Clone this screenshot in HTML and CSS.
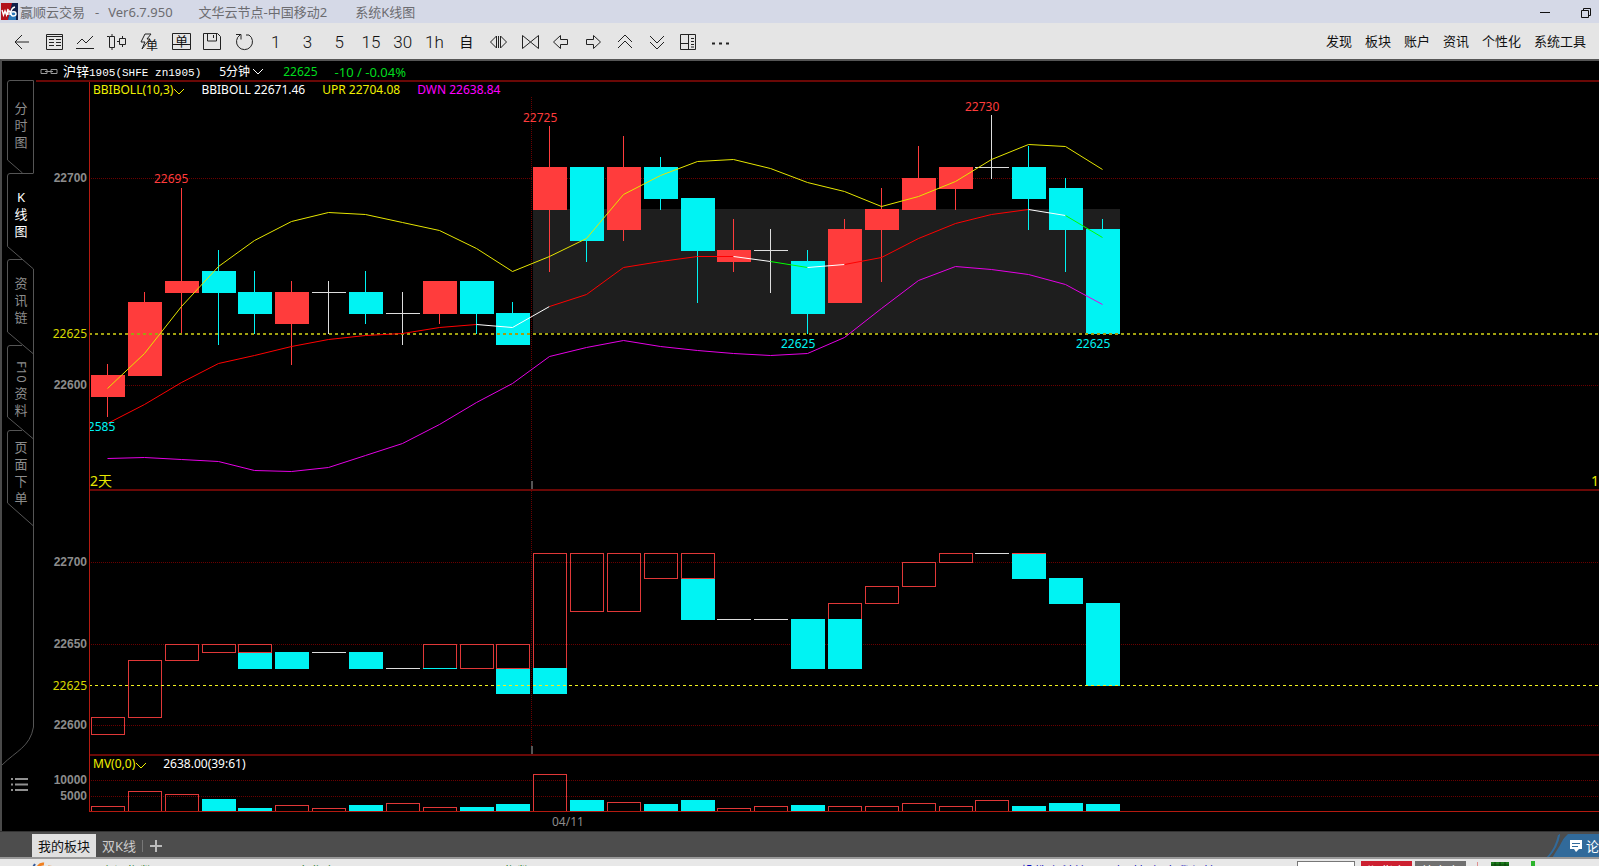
FILE: index.html
```html
<!DOCTYPE html>
<html lang="zh-CN">
<head>
<meta charset="utf-8">
<title>赢顺云交易</title>
<link rel="stylesheet" href="styles.css">
</head>
<body>
<div class="app">
  <header class="titlebar">
    <svg class="logo" width="17" height="17" viewBox="0 0 17 17" aria-hidden="true">
      <rect width="17" height="17" fill="#10204a"/><path d="M0 0h11L7 17H0z" fill="#b3121c"/><path d="M9 9h6v8H7z" fill="#2a78b8"/>
      <path d="M1 7l1.500 5L4 8l1.500 4L7 6v6M7 9q2-2 2 0v3M14 4q-4 1-4 6q0 3 2 3q3 0 3-2q0-3-4-2" fill="none" stroke="#fff" stroke-width="1.400"/>
    </svg>
    <span class="t-name">赢顺云交易</span><span class="t-dash">-</span><span class="t-ver">Ver6.7.950</span>
    <span class="t-node">文华云节点-中国移动2</span><span>系统K线图</span>
    <div class="winbtns">
      <button aria-label="最小化"><svg width="14" height="14"><path d="M2 7.500h10"/></svg></button>
      <button aria-label="还原"><svg width="14" height="14"><path d="M2.500 5.500h7v7h-7zM4.500 5V3.500h7v7H10"/></svg></button>
    </div>
  </header>

  <nav class="toolbar">
    <div class="tools">
      <button aria-label="后退"><svg width="24" height="24"><path d="M19 12H5M12 5l-7 7 7 7"/></svg></button>
      <button aria-label="报价"><svg width="24" height="24"><path d="M4.500 4.500h16v15h-16zM7 9.500h5M14 9.500h5M7 12.500h5M14 12.500h5M7 15.500h5M14 15.500h5M4 6.500h16"/></svg></button>
      <button aria-label="分时"><svg width="24" height="24"><path d="M3 18.500h18M4 14l5-5 4 4 7-7"/></svg></button>
      <button aria-label="K线"><svg width="24" height="24"><path d="M4.500 6.500h5v11h-5zM7 4v2.500M7 17.500V20M14.500 8.500h6v6h-6zM17.500 6v2.500M17.500 14.500V17M2 6.500h2M12 11.500h2"/></svg></button>
      <button aria-label="闪电下单"><svg width="24" height="24"><path d="M8 4h6l-4 5h3L5 19l3-7H4z"/><text x="9" y="20" font-size="12">单</text></svg></button>
      <button aria-label="下单"><svg width="24" height="24"><path d="M3.500 3.500h18v16h-18zM3 14.500h4M18 14.500h4"/><text x="6" y="16" font-size="13">单</text></svg></button>
      <button aria-label="保存"><svg width="24" height="24"><path d="M3.500 3.500h14l3 3v13h-17zM7.500 4v7h9V4M13.500 5v3"/></svg></button>
      <button aria-label="刷新"><svg width="24" height="24"><path d="M8 5a8 8 0 1 0 9 0M4 4.500h5v5M14 5h3"/></svg></button>
      <button>1</button><button>3</button><button>5</button><button>15</button><button>30</button><button>1h</button>
      <button class="zi">自</button>
      <button aria-label="放大"><svg width="24" height="24"><path d="M10.500 6v12l-6-6zM14.500 6v12l6-6zM12.500 6v12"/></svg></button>
      <button aria-label="缩小"><svg width="24" height="24"><path d="M4.500 5.500v13l8-6.500zM20.500 5.500v13l-8-6.500z"/></svg></button>
      <button aria-label="左移"><svg width="24" height="24"><path d="M11.500 5.500v4h7v5h-7v4L4.500 12z"/></svg></button>
      <button aria-label="右移"><svg width="24" height="24"><path d="M12.500 5.500v4h-7v5h7v4l7-6.500z"/></svg></button>
      <button aria-label="上翻"><svg width="24" height="24"><path d="M5 12l7-7 7 7M5 18l7-7 7 7"/></svg></button>
      <button aria-label="下翻"><svg width="24" height="24"><path d="M5 6l7 7 7-7M5 12l7 7 7-7"/></svg></button>
      <button aria-label="布局"><svg width="24" height="24"><path d="M4.500 4.500h15v15h-15zM12.500 4v16M5 13.500h7M15 8.500h3M15 11.500h3M15 14.500h3M15 17h3"/></svg></button>
      <button aria-label="更多"><svg width="24" height="24"><path d="M4 13.500h3M11 13.500h3M18 13.500h3" stroke-width="2"/></svg></button>
    </div>
    <div class="menus">
      <button>发现</button><button>板块</button><button>账户</button><button>资讯</button><button>个性化</button><button>系统工具</button>
    </div>
  </nav>

  <main class="main">
    <aside class="side">
      <svg class="side-lines" width="34" height="770" aria-hidden="true">
        <path d="M31.500 112V19.500H8q-2.500 0-2.500 2.500V99l15 13M31.500 112.500H8q-2.500 0-2.500 2.500V185.500L31.500 208V666M21 198.500H8q-2.500 0-2.500 2.500V271l26 22M20 284.500H8q-2.500 0-2.500 2.500V356l26 22M20 369.500H8q-2.500 0-2.500 2.500V442l26 23M31.500 666C28 686 14 690 0 704"/>
      </svg>
      <button class="vtab first"><span>分</span><span>时</span><span>图</span></button>
      <button class="vtab on"><span>K</span><span>线</span><span>图</span></button>
      <button class="vtab"><span>资</span><span>讯</span><span>链</span></button>
      <button class="vtab"><span class="rot">F10</span><span>资</span><span>料</span></button>
      <button class="vtab last"><span>页</span><span>面</span><span>下</span><span>单</span></button>
      <button class="list" aria-label="列表"><svg width="18" height="16"><path d="M0 2h2M4 2h13M0 7.500h2M4 7.500h13M0 13h2M4 13h13"/></svg></button>
    </aside>

    <section class="chart">
      <div class="chart-head">
        <svg class="chain" width="18" height="8"><path d="M7 1.500H1v4h6zM11 1.500h6v4h-6zM5 3.500h8"/></svg>
        <span class="sym">沪锌<span class="mono">1905(SHFE zn1905)</span></span>
        <label class="period"><select aria-label="周期"><option>5分钟</option></select><svg width="12" height="8"><path d="M1 1l5 5 5-5"/></svg></label>
        <span class="green last-price">22625</span><span class="green change">-10 / -0.04%</span>
      </div>
      <div class="panel p-main">
        <svg id="candles" class="plot"></svg>
        <div class="legend">
          <button class="yellow">BBIBOLL(10,3)<svg width="10" height="8"><path d="M0 1l5 5 5-5"/></svg></button>
          <span>BBIBOLL 22671.46</span><span class="yellow">UPR 22704.08</span><span class="magenta">DWN 22638.84</span>
        </div>
      </div>
      <div class="panel p-sub"><svg id="bricks" class="plot"></svg></div>
      <div class="panel p-vol">
        <svg id="volume" class="plot"></svg>
        <div class="legend"><button class="yellow">MV(0,0)<svg width="10" height="8"><path d="M0 1l5 5 5-5"/></svg></button><span>2638.00(39:61)</span></div>
      </div>
      <div class="time-axis">04/11</div>
    </section>
  </main>

  <nav class="pages">
    <button class="page on">我的板块</button><button class="page">双K线</button><i class="sep"></i>
    <button class="add" aria-label="添加"><svg width="12" height="12"><path d="M0 6h12M6 0v12"/></svg></button>
    <a class="forum" href="#">
      <svg class="forum-bg" width="53" height="24"><path d="M22 0h31v24H0Q10 17 13 0H15Q13 15 5 24L17 5z" fill="#316a9a"/><path d="M14 0Q10 16 2 24H6Q14 12 20 0z" fill="#4d4d4d"/><path d="M12 1h2Q12 14 2 24H0Q9 15 12 1z" fill="#316a9a"/></svg>
      <svg class="bubble" width="12" height="14"><path d="M0 1h12v9H9l-3 3-2-3H0z" fill="#fff"/><path d="M2 4.500h8M2 7.500h6" stroke="#316a9a"/></svg><span>论</span>
    </a>
  </nav>

  <footer class="status">
    <svg class="mark" width="40" height="18"><path d="M0 10l5-8" stroke="#345a9a" stroke-width="2"/><path d="M7 12Q7 1 14 2M18 5l8 1M30 6h4" stroke="#f08020" stroke-width="3" fill="none"/></svg>
    <span class="idx"><span>上证指数</span><span>3189.96</span><span>-51.87</span></span>
    <span class="idx"><span>文华商品</span><span>156.11</span><span>-0.24</span></span>
    <span class="idx"><span>IF指数</span><span>188.48</span><span>-4.34</span></span>
    <a class="news" href="#">投教小科普，开户时如何自我保护</a>
    <input class="code" aria-label="代码">
    <button class="acc red">期货户</button><button class="acc grey">外盘户</button>
    <i class="bar"></i>
    <svg class="net" width="46" height="20"><path d="M0 1h18v16H0z" fill="#1b7a1b"/><path d="M0 4h18M0 8h18M4 1v16M9 1v16M14 1v16" stroke="#0b400b"/><path d="M40 0h4v18h-4zM35 5h4v13h-4z" fill="#2db52d"/></svg>
  </footer>
</div>
<script src="chart.js"></script>
</body>
</html>
```
FILE: styles.css
```css
* { box-sizing: border-box; }
body {
  margin: 0;
  height: 100vh;
  overflow: hidden;
  background: #000;
  font-family: "Noto Sans", "Noto Sans CJK SC", sans-serif;
  font-size: 13px;
  line-height: 18px;
}
button, select, input { font: inherit; color: inherit; background: none; border: 0; padding: 0; margin: 0; }
button { white-space: nowrap; }
a { text-decoration: none; }
svg { display: block; flex: none; fill: none; }

/* The status bar runs past the lower edge of the window. */
.app { display: flex; flex-direction: column; height: calc(100vh + 17px); }

.titlebar {
  flex: 0 0 23px;
  display: flex;
  align-items: center;
  padding-left: 1px;
  background: #d5d9e7;
  color: #6c6c70;
  white-space: nowrap;
}
.t-name { margin-left: 2px; }
.t-dash { margin: 0 9px 0 10px; }
.t-ver { margin-right: 26px; }
.t-node { margin-right: 28px; }
.winbtns { display: flex; margin-left: auto; padding-right: 6px; gap: 27px; }
.winbtns svg { stroke: #111; }

.toolbar {
  flex: 0 0 36px;
  display: flex;
  align-items: center;
  justify-content: space-between;
  padding: 0 13px 0 6px;
  background: #e5e5e5;
  color: #111;
}
.tools { display: flex; flex: 0 0 730px; padding-top: 2px; }
.tools button {
  flex: 1 1 0;
  height: 30px;
  display: flex;
  align-items: center;
  justify-content: center;
  font-family: Roboto, "Noto Sans CJK SC", sans-serif;
  font-size: 17px;
  font-weight: 300;
}
.tools .zi { font-size: 14px; font-weight: 400; }
.tools svg { stroke: #222; }
.tools text { fill: #111; stroke: none; font-family: "Noto Sans CJK SC", sans-serif; font-weight: 400; }
.menus { display: flex; gap: 13px; }

.main {
  flex: 1;
  min-height: 0;
  display: flex;
  border-top: 2px solid #565656;
  border-left: 2px solid #4a4a4a;
  background: #000;
}
.side {
  position: relative;
  flex: 0 0 34px;
  display: flex;
  flex-direction: column;
  padding-top: 19px;
}
.side-lines { position: absolute; left: 0; top: 0; stroke: #555; }
.vtab {
  position: relative;
  flex: 0 0 86px;
  display: flex;
  flex-direction: column;
  align-items: center;
  padding: 16px 0 0 4px;
  line-height: 17px;
  color: #8c8c8c;
}
.vtab.first { flex-basis: 93px; padding-top: 20px; }
.vtab.last { padding-top: 8px; }
.vtab.on { color: #fff; }
.vtab .rot { writing-mode: vertical-rl; padding-bottom: 2px; }
.list { margin: auto 0 38px 9px; align-self: flex-start; }
.list svg { stroke: #909090; stroke-width: 2; }

.chart { flex: 1; min-width: 0; display: flex; flex-direction: column; color: #fff; }
.chart-head {
  flex: 0 0 21px;
  min-height: 0;
  display: flex;
  align-items: center;
  padding: 2px 0 0 4px;
  border-bottom: 2px solid #6a0806;
  white-space: nowrap;
}
.chain { stroke: #999; }
.sym { margin: 0 18px 0 5px; }
.mono { font-family: "Liberation Mono", monospace; font-size: 11px; }
.period { display: flex; align-items: center; gap: 2px; margin-right: 19px; }
.period select { appearance: none; height: 18px; font-size: 12px; }
.period svg { stroke: #fff; }
.green { color: #00dc1e; font-size: 12px; }
.last-price { margin-right: 17px; }
.change { font-size: 13px; }
.yellow { color: #f0f000; }
.magenta { color: #f0f; }

.panel { position: relative; min-height: 0; }
.p-main { flex: 409 1 0; }
.p-sub { flex: 265 1 0; }
.p-vol { flex: 56 1 0; }
.plot { width: 100%; height: 100%; font-size: 12px; }
.legend {
  position: absolute;
  left: 57px;
  top: 0;
  display: flex;
  gap: 17px;
  font-size: 12px;
  line-height: 16px;
  white-space: nowrap;
}
.legend button { display: flex; align-items: center; gap: 1px; }
.legend button svg { stroke: #f0f000; margin-top: 4px; }
.time-axis { flex: 0 0 19px; min-height: 0; padding-left: 516px; color: #8c8c8c; font-size: 12px; line-height: 19px; }

.axis-line { stroke: #b41a10; }
.rule { stroke: #6a0806; stroke-width: 2; }
.grid { stroke: #6a0000; stroke-dasharray: 1 1; }
.now { stroke: #a0a010; stroke-width: 2; stroke-dasharray: 3 3; }
.now.thin { stroke: #f0f020; stroke-width: 1; }
.tick { stroke: #555; stroke-width: 2; }
.session { fill: #1e1e1e; }
.up { fill: #ff3c3c; }
.down { fill: #00f3f3; }
.flat { fill: #ddd; }
.hollow { fill: none; stroke: #e03838; }
.band { stroke-width: 1; }
.ax { fill: #8c8c8c; font: bold 12px "Liberation Sans", sans-serif; text-anchor: end; }
.ax-now { fill: #d8d800; text-anchor: end; }
.hi { fill: #ff3c3c; }
.lo { fill: #00f3f3; }
.days { fill: #e8e800; font-size: 14px; }

.pages {
  flex: 0 0 26px;
  display: flex;
  align-items: stretch;
  padding: 2px 0 0 32px;
  background: #4d4d4d;
  border-top: 1px solid #333;
}
.page { padding: 0 6px; color: #ccc; }
.page.on { background: #e0e0e0; color: #111; }
.sep { width: 1px; margin: 6px 7px 5px 0; background: #777; }
.add svg { stroke: #bbb; stroke-width: 2; }
.forum {
  position: relative;
  width: 53px;
  margin-left: auto;
  display: flex;
  align-items: center;
  padding-left: 24px;
  gap: 4px;
  overflow: hidden;
  color: #fff;
}
.forum-bg { position: absolute; left: 0; top: 0; }
.bubble, .forum span { position: relative; flex: none; }

.status {
  flex: 0 0 26px;
  display: flex;
  align-items: center;
  padding: 0 62px 0 30px;
  background: #e8e8e8;
  border-top: 2px solid #999;
  white-space: nowrap;
}
.mark { margin-right: 31px; }
.idx { display: flex; gap: 12px; flex: 0 0 196px; color: #187818; }
.news { margin-left: auto; margin-right: 81px; color: #1010c0; }
.code { width: 58px; height: 20px; margin-right: 6px; background: #fff; border: 1px solid #777; }
.acc { width: 51px; height: 20px; margin-right: 3px; color: #fff; }
.red { background: #cc2030; }
.grey { background: #707070; }
.bar { width: 1px; height: 18px; margin: 0 13px 0 8px; background: #e09090; }
```
FILE: chart.js
```js
const PITCH = 36.85, LEFT = 55, BODY = 34, AXIS = 53, SPLIT = 495;
const NOW = 22625;

// [open/close top, open/close bottom, high, low, kind]
const candles = [
  [605,595,610,585,'up'],[640,605,645,605,'up'],[650,645,695,625,'up'],[655,645,665,620,'down'],
  [645,635,655,625,'down'],[645,630,650,610,'up'],[645,645,650,625,'flat'],[645,635,655,630,'down'],
  [635,635,645,620,'flat'],[650,635,650,630,'up'],[650,635,650,625,'down'],[635,620,640,620,'down'],
  [705,685,725,655,'up'],[705,670,705,660,'down'],[705,675,720,670,'up'],[705,690,710,685,'down'],
  [690,665,690,640,'down'],[665,660,680,655,'up'],[665,665,675,645,'flat'],[660,635,665,625,'down'],
  [675,640,680,640,'up'],[685,675,695,650,'up'],[700,685,715,685,'up'],[705,695,705,685,'up'],
  [705,705,730,700,'flat'],[705,690,715,675,'down'],[695,675,700,655,'down'],[675,625,680,625,'down']
];
const upper = [598.6,615.5,638.1,657.5,669.7,679.1,683.6,682.4,678.5,674.9,666,655,662.4,670.7,692,701.1,707.8,709,704.7,697.7,693.7,686.2,691.2,698.2,708.8,716.3,715.3,704.1];
const middle = [581.9,591,601.6,610.7,614.6,619,622.3,624.4,625.1,628,629.5,628,638.3,644.1,656.9,659.8,662.2,662.2,659.8,656.9,658.6,661.9,670.8,678,682.4,684.8,682.1,671.5];
const lower = [564.8,565.3,564.7,563.4,559.1,558.6,560.5,566.5,572,581.2,592,601.1,614.3,618.2,621.8,618.7,617,615.3,614.8,615.7,623,637.2,650.9,657.6,656.2,653.8,648.7,639.1];
const middleRuns = [[0,10,'#f00'],[10,12,'#fff'],[12,17,'#f00'],[17,18,'#fff'],[18,19,'#0f0'],[19,20,'#fff'],[20,25,'#f00'],[25,26,'#fff'],[26,27,'#0f0']];

// [column, top, bottom, kind]
const bricks = [
  [0,605,595,'h'],[1,640,605,'h'],[2,650,640,'h'],[3,650,645,'h'],[4,645,635,'down'],[4,650,645,'h'],
  [5,645,635,'down'],[6,645,645,'flat'],[7,645,635,'down'],[8,635,635,'flat'],[9,650,635,'h'],[9,635,635,'down'],
  [10,650,635,'h'],[11,635,620,'down'],[11,650,635,'h'],[12,705,635,'h'],[12,635,620,'down'],
  [13,705,670,'h'],[14,705,670,'h'],[15,705,690,'h'],[16,690,665,'down'],[16,705,690,'h'],
  [17,665,665,'flat'],[18,665,665,'flat'],[19,665,635,'down'],[20,675,665,'h'],[20,665,635,'down'],
  [21,685,675,'h'],[22,700,685,'h'],[23,705,700,'h'],[24,705,705,'flat'],[25,705,690,'down'],[25,705,705,'up'],
  [26,690,675,'down'],[27,675,625,'down']
];
const volumes = [1750,6650,5550,4100,1270,2220,1270,2220,2850,1590,1590,2380,11900,3800,3170,2380,3800,1270,2060,2220,2060,2060,2850,2060,3800,1750,2850,2638];
const filled = new Set([3,4,7,10,11,13,15,16,19,25,26,27]);

const colX = i => Math.round(LEFT + i * PITCH);
const midX = i => colX(i) + 16;
const line = (c, x1, y1, x2, y2) => `<line class="${c}" x1="${x1}" y1="${y1}" x2="${x2}" y2="${y2}"/>`;
const rect = (c, x, y, w, h) => `<rect class="${c}" x="${x}" y="${y}" width="${w}" height="${h}"/>`;
const text = (c, x, y, s) => `<text class="${c}" x="${x}" y="${y}">${s}</text>`;
const hollow = (x, y, w, h) => rect('hollow', x + .5, y + .5, w - 1, h);

function sized(id, top, bottom) {
  const el = document.getElementById(id);
  const w = el.clientWidth, h = el.clientHeight;
  return { el, w, h, y: v => Math.round(h * (top - v) / (top - bottom)) };
}

function drawCandles() {
  const { el, w, h, y } = sized('candles', 746, 549.1);
  let s = '';
  for (const p of [700, 600]) s += line('grid', AXIS, y(p) + .5, w, y(p) + .5) + text('ax', 51, y(p) + 4, 22000 + p);
  s += rect('session', 497, y(685), colX(27) + BODY - 497, y(625) - y(685));
  s += line('grid', SPLIT + .5, 15, SPLIT + .5, h);
  candles.forEach(([a, b, hi, lo, k], i) => {
    s += rect(k, midX(i), y(hi), 1, y(lo) - y(hi) + 1);
    s += rect(k, colX(i), y(a), BODY, y(b) - y(a) + 1);
  });
  s += line('now', AXIS, y(625) + 1, w, y(625) + 1) + text('ax-now', 51, y(625) + 5, NOW);
  const path = (arr, a, b, c) => {
    const pts = arr.slice(a, b + 1).map((v, i) => `${midX(a + i) + .5},${y(v) + .5}`).join(' ');
    return `<polyline class="band" stroke="${c}" points="${pts}"/>`;
  };
  s += path(upper, 0, 27, '#e6e600') + path(lower, 0, 27, '#e600e6');
  for (const [a, b, c] of middleRuns) s += path(middle, a, b, c);
  s += text('hi', 118, y(695) - 5, '22695') + text('hi', 487, y(725) - 4, '22725') + text('hi', 929, y(730) - 4, '22730');
  s += text('lo', 745, y(625) + 15, '22625') + text('lo', 1040, y(625) + 15, '22625');
  s += `<svg x="${AXIS}" y="0" width="60" height="${h}">${text('lo', -8, y(585) + 15, '22585')}</svg>`;
  s += text('days', 54, h - 5, '2天') + text('days', w - 8, h - 5, '1');
  s += line('tick', SPLIT + 1, h - 10, SPLIT + 1, h) + line('rule', AXIS, h - 1, w, h - 1) + line('axis-line', AXIS + .5, 0, AXIS + .5, h);
  el.innerHTML = s;
}

function drawBricks() {
  const { el, w, h, y } = sized('bricks', 743, 581.4);
  let s = '';
  for (const p of [700, 650, 600]) s += line('grid', AXIS, y(p) + .5, w, y(p) + .5) + text('ax', 51, y(p) + 4, 22000 + p);
  s += line('grid', SPLIT + .5, 0, SPLIT + .5, h);
  for (const [i, a, b, k] of bricks)
    s += k === 'h' ? hollow(colX(i), y(a), BODY, y(b) - y(a)) : rect(k, colX(i), y(a), BODY, y(b) - y(a) + 1);
  s += line('now thin', AXIS, y(625) + .5, w, y(625) + .5) + text('ax-now', 51, y(625) + 5, NOW);
  s += line('tick', SPLIT + 1, h - 10, SPLIT + 1, h) + line('rule', AXIS, h - 1, w, h - 1) + line('axis-line', AXIS + .5, 0, AXIS + .5, h);
  el.innerHTML = s;
}

function drawVolume() {
  const { el, w, h, y } = sized('volume', 17750, 0);
  let s = '';
  for (const v of [10000, 5000]) s += line('grid', AXIS, y(v) + .5, w, y(v) + .5) + text('ax', 51, y(v) + 4, v);
  volumes.forEach((v, i) => {
    s += filled.has(i) ? rect('down', colX(i), y(v), BODY, h - y(v)) : hollow(colX(i), y(v), BODY, h - y(v));
  });
  s += line('axis-line', AXIS, h - .5, w, h - .5) + line('axis-line', AXIS + .5, 0, AXIS + .5, h);
  el.innerHTML = s;
}

function draw() { drawCandles(); drawBricks(); drawVolume(); }
draw();
addEventListener('resize', draw);
```
